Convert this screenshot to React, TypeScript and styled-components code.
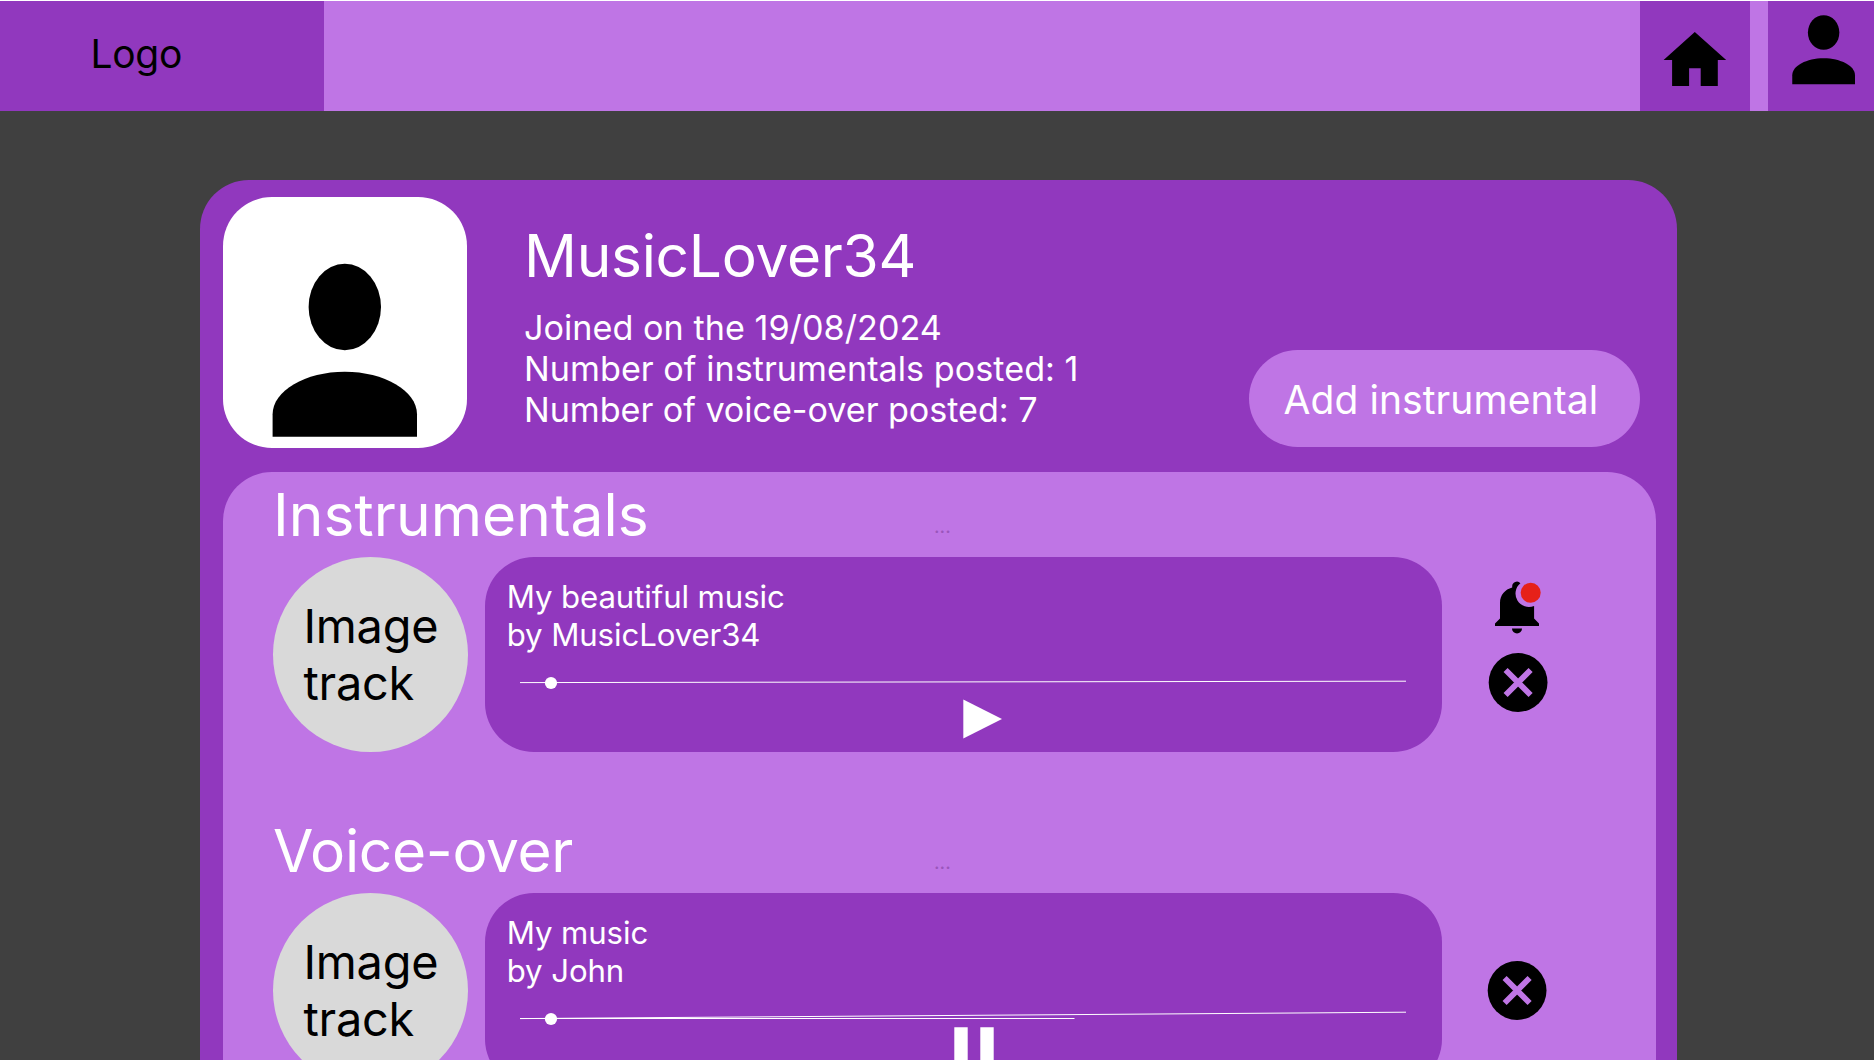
import React from 'react';
import styled, { createGlobalStyle } from 'styled-components';

const colors = {
  deep: '#9138be',
  light: '#bf75e5',
  page: '#404040',
  disc: '#d9d9d9',
  alert: '#e62119',
};

const GlobalStyle = createGlobalStyle`
  * { box-sizing: border-box; }
  html, body { margin: 0; padding: 0; height: 1060px; overflow: hidden; background: #ffffff; }
  body { font-family: Inter, "Liberation Sans", sans-serif; font-weight: 400; }
  h1, h2, p { margin: 0; font-weight: 400; }
  button { font: inherit; border: 0; padding: 0; background: none; cursor: pointer; }
  svg { display: block; }
`;

const Page = styled.div`
  display: flex;
  flex-direction: column;
  width: 1874px;
  height: 1060px;
  padding-top: 1px;
  overflow: hidden;
`;

const Header = styled.header`
  display: flex;
  flex: none;
  height: 110px;
  background: ${colors.light};
`;

const Logo = styled.div`
  width: 324px;
  padding: 29px 0 0 90.4px;
  background: ${colors.deep};
  color: #000;
  font-size: 39px;
  line-height: 47px;
  letter-spacing: -0.25px;
`;

const HeaderNav = styled.nav`
  display: flex;
  gap: 18px;
  margin-left: auto;
`;

const NavButton = styled.button<{ $width: number }>`
  display: flex;
  align-items: flex-start;
  width: ${(p) => p.$width}px;
  height: 110px;
  background: ${colors.deep};
`;

const NavPerson = styled.span`
  display: block;
  padding: 14px 0 0 24px;
`;

const Main = styled.main`
  flex: 1;
  min-height: 0;
  padding: 69px 197px 0 200px;
  background: ${colors.page};
  overflow: hidden;
`;

const ProfileCard = styled.section`
  height: 1100px;
  padding: 17px 21px 0 23px;
  border-radius: 49px;
  background: ${colors.deep};
`;

const ProfileTop = styled.div`
  display: flex;
  height: 275px;
`;

const Avatar = styled.div`
  width: 244px;
  height: 251px;
  padding: 66px 0 0 49px;
  border-radius: 49px;
  background: #fff;
`;

const ProfileInfo = styled.div`
  width: 782px;
  padding: 23px 0 0 57px;
  color: #fff;
`;

const UserName = styled.h1`
  font-size: 58.6px;
  line-height: 71px;
  letter-spacing: -0.27px;
  white-space: nowrap;
`;

const Stats = styled.div`
  margin-top: 16px;
  font-size: 34.15px;
  line-height: 41.2px;
  white-space: nowrap;
`;

const StatLine = styled.p<{ $spacing: number }>`
  letter-spacing: ${(p) => p.$spacing}px;
`;

const AddButton = styled.button`
  width: 391px;
  height: 97px;
  margin-top: 153px;
  padding: 2px 7.4px 0 0;
  border-radius: 49px;
  background: ${colors.light};
  color: #fff;
  font-size: 39px;
  line-height: 47px;
  letter-spacing: 0.08px;
  white-space: nowrap;
`;

const Library = styled.div`
  display: flex;
  flex-direction: column;
  gap: 63px;
  height: 900px;
  padding: 7px 0 0 50px;
  border-radius: 49px;
  background: ${colors.light};
`;

const SectionHead = styled.div`
  display: flex;
  height: 78px;
`;

const SectionTitle = styled.h2<{ $spacing: number }>`
  width: 661px;
  color: #fff;
  font-size: 58.6px;
  line-height: 71px;
  letter-spacing: ${(p) => p.$spacing}px;
  white-space: nowrap;
`;

const More = styled.span`
  padding-top: 35px;
  color: #9a55bb;
  font-size: 19.5px;
  line-height: 24px;
`;

const TrackRow = styled.div`
  display: flex;
  height: 195px;
`;

const Cover = styled.div`
  display: flex;
  align-items: center;
  width: 195px;
  height: 195px;
  padding-left: 30.4px;
  border-radius: 50%;
  background: ${colors.disc};
  color: #000;
  font-size: 46.85px;
  line-height: 56.6px;
  letter-spacing: -0.2px;
`;

const Player = styled.div`
  display: flex;
  flex-direction: column;
  width: 957.5px;
  height: 195px;
  margin-left: 16.5px;
  padding-top: 21px;
  border-radius: 49px;
  background: ${colors.deep};
`;

const TrackText = styled.div`
  height: 88px;
  padding-left: 22.2px;
  color: #fff;
  font-size: 31.2px;
  line-height: 38px;
  letter-spacing: -0.1px;
  white-space: nowrap;
`;

const Actions = styled.div<{ $top: number; $left: number }>`
  display: flex;
  flex-direction: column;
  gap: 19px;
  width: 60px;
  margin-left: ${(p) => p.$left}px;
  padding-top: ${(p) => p.$top}px;
`;

const PersonIcon = ({ width, height }: { width: number; height: number }) => (
  <svg width={width} height={height} viewBox="0 0 145 173" preserveAspectRatio="none" overflow="visible">
    <g transform="translate(0.6 0.7)">
      <ellipse cx="72.200" cy="43.300" rx="36.200" ry="43.300" />
      <path d="M0 173V150.500C0 127 33 108 72.200 108S144.400 127 144.400 150.500V173Z" />
    </g>
  </svg>
);

const HomeIcon = () => (
  <svg width="110" height="110" viewBox="0 0 110 110">
    <path d="M54.800 31 86.200 59H77.800V85H60.700V67.300H49.100V85H32.100V59H23.600Z" />
  </svg>
);

const BellIcon = () => (
  <svg width="60" height="52" viewBox="0 0 60 52" overflow="visible">
    <path d="M6 44V41.400L11 36.500V21C11 13.200 16 7.500 23.200 5.600V4.500A4.700 4.700 0 0 1 31.400 1.200 13.400 13.400 0 0 0 45.100 23.900V36.500L50 41.400V44Z" />
    <path d="M23 46.400H33A5 5 0 0 1 23 46.400Z" />
    <circle cx="41.700" cy="10.700" r="10" fill={colors.alert} />
  </svg>
);

const CloseIcon = () => (
  <svg width="60" height="59" viewBox="0 0 60 59" overflow="visible">
    <circle cx="29.100" cy="29.500" r="29.400" />
    <path d="M16.600 17 41.600 42M41.600 17 16.600 42" stroke={colors.light} strokeWidth="5.800" />
  </svg>
);

interface SeekProps {
  endY: number;
  loadedTo?: number;
}

/* Hairline track with the playhead knob; the buffered part is a second line. */
const SeekBar = ({ endY, loadedTo }: SeekProps) => (
  <svg width="957" height="24" viewBox="0 0 957 24">
    <path d={`M35 16.600 921 ${endY}`} stroke="#fff" strokeWidth="1" />
    {loadedTo && <path d={`M35 16.500H${loadedTo}`} stroke="#fff" strokeWidth="1" />}
    <circle cx="66" cy="17" r="6.100" fill="#fff" />
  </svg>
);

const PlayIcon = () => (
  <svg width="957" height="50" viewBox="0 0 957 50">
    <path d="M478.300 9.500 517 29 478.300 48.500Z" fill="#fff" />
  </svg>
);

const PauseIcon = () => (
  <svg width="957" height="50" viewBox="0 0 957 50">
    <path d="M469.300 1.300H482.700V40H469.300ZM495.300 1.300H508.700V40H495.300Z" fill="#fff" />
  </svg>
);

interface Track {
  section: string;
  spacing: number;
  title: string;
  author: string;
  playing: boolean;
  notify: boolean;
  endY: number;
  loadedTo?: number;
}

const tracks: Track[] = [
  {
    section: 'Instrumentals',
    spacing: 0.08,
    title: 'My beautiful music',
    author: 'MusicLover34',
    playing: false,
    notify: true,
    endY: 15.2,
  },
  {
    section: 'Voice-over',
    spacing: -0.33,
    title: 'My music',
    author: 'John',
    playing: true,
    notify: false,
    endY: 10.2,
    loadedTo: 589.5,
  },
];

const TrackSection = ({ track }: { track: Track }) => (
  <section>
    <SectionHead>
      <SectionTitle $spacing={track.spacing}>{track.section}</SectionTitle>
      <More>...</More>
    </SectionHead>
    <TrackRow>
      <Cover>
        <p>
          Image
          <br />
          track
        </p>
      </Cover>
      <Player>
        <TrackText>
          <p>{track.title}</p>
          <p>by {track.author}</p>
        </TrackText>
        <SeekBar endY={track.endY} loadedTo={track.loadedTo} />
        {track.playing ? <PauseIcon /> : <PlayIcon />}
      </Player>
      <Actions $top={track.notify ? 25 : 68} $left={track.notify ? 47 : 46}>
        {track.notify && <BellIcon />}
        <CloseIcon />
      </Actions>
    </TrackRow>
  </section>
);

export default function App() {
  return (
    <Page>
      <GlobalStyle />
      <Header>
        <Logo>Logo</Logo>
        <HeaderNav>
          <NavButton $width={110} aria-label="Home">
            <HomeIcon />
          </NavButton>
          <NavButton $width={106} aria-label="Profile">
            <NavPerson>
              <PersonIcon width={63} height={69} />
            </NavPerson>
          </NavButton>
        </HeaderNav>
      </Header>
      <Main>
        <ProfileCard>
          <ProfileTop>
            <Avatar>
              <PersonIcon width={145} height={173} />
            </Avatar>
            <ProfileInfo>
              <UserName>MusicLover34</UserName>
              <Stats>
                <StatLine $spacing={0.04}>Joined on the 19/08/2024</StatLine>
                <StatLine $spacing={0.04}>Number of instrumentals posted: 1</StatLine>
                <StatLine $spacing={-0.04}>Number of voice-over posted: 7</StatLine>
              </Stats>
            </ProfileInfo>
            <AddButton>Add instrumental</AddButton>
          </ProfileTop>
          <Library>
            {tracks.map((track) => (
              <TrackSection key={track.section} track={track} />
            ))}
          </Library>
        </ProfileCard>
      </Main>
    </Page>
  );
}
